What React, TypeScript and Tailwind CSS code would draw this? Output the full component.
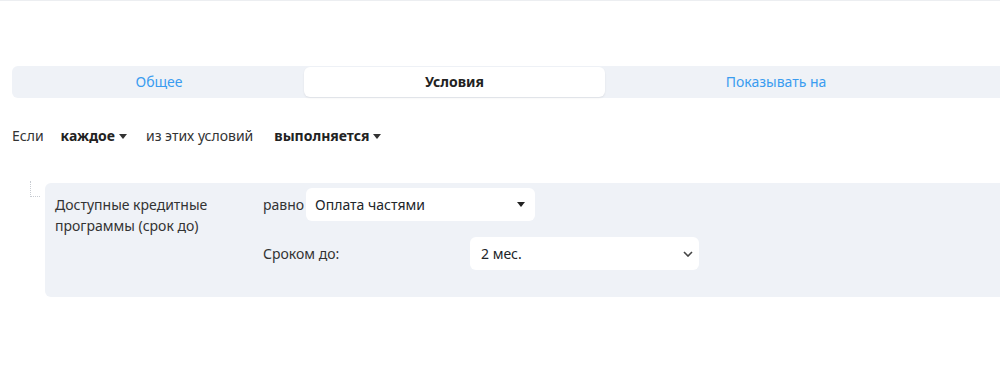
import React from 'react';

const Caret = () => (
  <svg width="8" height="5" viewBox="0 0 8 5" className="ml-1 inline-block">
    <path d="M0 0h8L4 5z" fill="#333" />
  </svg>
);

const Chevron = () => (
  <svg width="10" height="6" viewBox="0 0 10 6">
    <path d="M1 1l4 4 4-4" fill="none" stroke="#444" strokeWidth="1.6" />
  </svg>
);

const tabs = [
  { label: 'Общее', width: 'w-[290px]' },
  { label: 'Условия', width: 'w-[301px]', active: true },
  { label: 'Показывать на', width: 'w-[342px]' },
];

export default function App() {
  return (
    <div className="h-[379px] w-[1000px] overflow-hidden bg-white border-t border-[#eceef1] font-['Noto_Sans',sans-serif] text-sm text-[#212529]">
      <div className="pl-3 pt-[65px]">
        {/* tab bar */}
        <div className="flex h-8 items-center rounded-l-md bg-[#eff2f7] pl-0.5 w-[1000px]">
          {tabs.map((t) => (
            <div
              key={t.label}
              className={
                t.active
                  ? `${t.width} flex h-[30px] items-center justify-center rounded-md bg-white font-bold text-[#222] shadow-[0_1px_2px_rgba(0,0,0,0.08)]`
                  : `${t.width} flex h-[30px] items-center justify-center text-[#3a9cf0]`
              }
            >
              {t.label}
            </div>
          ))}
        </div>

        {/* match mode row */}
        <div className="mt-[28px] flex items-center text-sm">
          <span className="text-[#333]">Если</span>
          <button className="ml-[17px] flex items-center font-bold text-[#222]">
            каждое
            <Caret />
          </button>
          <span className="ml-[19px] text-[#333]">из этих условий</span>
          <button className="ml-[21px] flex items-center font-bold text-[#222]">
            выполняется
            <Caret />
          </button>
        </div>

        {/* condition */}
        <div className="mt-[37px] flex">
          <div className="ml-[18px] mt-[-2px] h-[16px] w-[10px] border-b border-l border-dotted border-[#c8ccd2]" />
          <div className="ml-[5px] flex h-[114px] flex-1 rounded-l-md bg-[#eff2f7] pl-[10px] pt-[11px]">
            <div className="w-[208px] leading-[21px] text-[#333]">
              Доступные кредитные программы (срок до)
            </div>
            <div className="flex flex-col">
              <div className="flex items-center">
                <span className="mt-[-6px] text-[#333]">равно</span>
                <div className="ml-[2px] mt-[-6px] flex h-[33px] w-[229px] items-center justify-between rounded-md bg-white pl-[9px] pr-[10px]">
                  <span>Оплата частями</span>
                  <svg width="8" height="5" viewBox="0 0 8 5">
                    <path d="M0 0h8L4 5z" fill="#222" />
                  </svg>
                </div>
              </div>
              <div className="mt-[16px] flex items-center">
                <span className="w-[207px] text-[#333]">Сроком до:</span>
                <div className="flex h-[33px] w-[229px] items-center justify-between rounded-md bg-white pl-[11px] pr-[6px]">
                  <span>2 мес.</span>
                  <Chevron />
                </div>
              </div>
            </div>
          </div>
        </div>
      </div>
    </div>
  );
}
